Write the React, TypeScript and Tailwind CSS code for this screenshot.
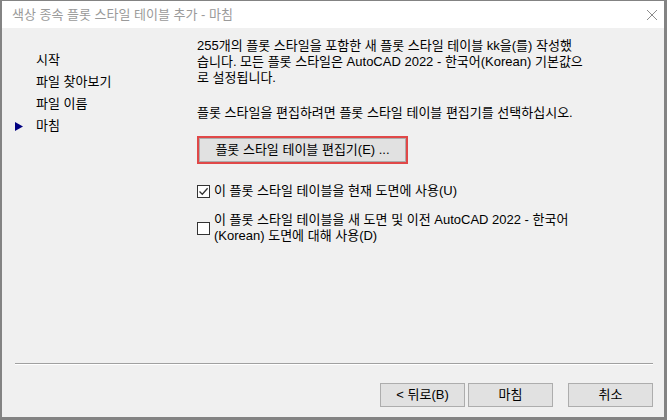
import React from "react";

const font = { fontFamily: '"Liberation Sans", "Noto Sans CJK KR", sans-serif' };

function Btn({ children, className = "" }: { children: React.ReactNode; className?: string }) {
  return (
    <div
      className={
        "h-[24px] flex items-center justify-center bg-[#e1e1e1] border border-[#adadad] text-[13px] leading-[16px] text-black " +
        className
      }
    >
      {children}
    </div>
  );
}

function CheckBox({ checked }: { checked: boolean }) {
  return (
    <div className="w-[13px] h-[13px] shrink-0 border border-[#333333] bg-white flex items-center justify-center">
      {checked && (
        <svg width="11" height="11" viewBox="0 0 11 11">
          <path d="M1.5 5.5 L4.3 8.3 L9.6 2.2" fill="none" stroke="#333" strokeWidth="1.3" />
        </svg>
      )}
    </div>
  );
}

export default function App() {
  return (
    <div
      className="w-[667px] h-[420px] flex flex-col bg-[#f0f0f0] border-t border-l-2 border-r-[3px] border-b-[3px] border-[#838383] text-black text-[13px] leading-[16px]"
      style={font}
    >
      <div className="h-[27px] shrink-0 bg-white flex items-center justify-between pl-[10px] pr-[6px]">
        <span className="text-[#9a9a9a] text-[13px]">색상 종속 플롯 스타일 테이블 추가 - 마침</span>
        <svg width="12" height="12" viewBox="0 0 12 12">
          <path d="M1 1 L11 11 M11 1 L1 11" stroke="#8c8c8c" strokeWidth="1" fill="none" />
        </svg>
      </div>
      <div className="flex-1 flex">
        <div className="w-[195px] shrink-0 pt-[21px] flex flex-col">
          {["시작", "파일 찾아보기", "파일 이름", "마침"].map((t, i) => (
            <div key={t} className="h-[22px] flex items-center">
              <div className="w-[34px] pl-[13px] flex items-center">
                {i === 3 && (
                  <svg width="8" height="9" viewBox="0 0 8 9">
                    <polygon points="0,0 8,4.5 0,9" fill="#000080" />
                  </svg>
                )}
              </div>
              <span>{t}</span>
            </div>
          ))}
        </div>
        <div className="flex-1 pt-[10px] flex flex-col items-start">
          <p>
            255개의 플롯 스타일을 포함한 새 플롯 스타일 테이블 kk을(를) 작성했
            <br />
            습니다. 모든 플롯 스타일은 AutoCAD 2022 - 한국어(Korean) 기본값으
            <br />로 설정됩니다.
          </p>
          <p className="mt-[19px]">플롯 스타일을 편집하려면 플롯 스타일 테이블 편집기를 선택하십시오.</p>
          <div className="mt-[15px] border-2 border-[#e04848] p-0">
            <Btn className="w-[207px] h-[21px]">플롯 스타일 테이블 편집기(E) ...</Btn>
          </div>
          <div className="mt-[19px] flex items-center gap-[4px]">
            <CheckBox checked />
            <span>이 플롯 스타일 테이블을 현재 도면에 사용(U)</span>
          </div>
          <div className="mt-[13px] flex items-center gap-[4px]">
            <CheckBox checked={false} />
            <span>
              이 플롯 스타일 테이블을 새 도면 및 이전 AutoCAD 2022 - 한국어
              <br />
              (Korean) 도면에 대해 사용(D)
            </span>
          </div>
        </div>
      </div>
      <div className="ml-[13px] mr-[11px] h-[2px] border-t border-[#a0a0a0] border-b border-b-white" />
      <div className="mt-[18px] mb-[10px] mr-[11px] flex justify-end">
        <Btn className="w-[85px]">&lt; 뒤로(B)</Btn>
        <Btn className="w-[85px] ml-[3px]">마침</Btn>
        <Btn className="w-[85px] ml-[15px]">취소</Btn>
      </div>
    </div>
  );
}
